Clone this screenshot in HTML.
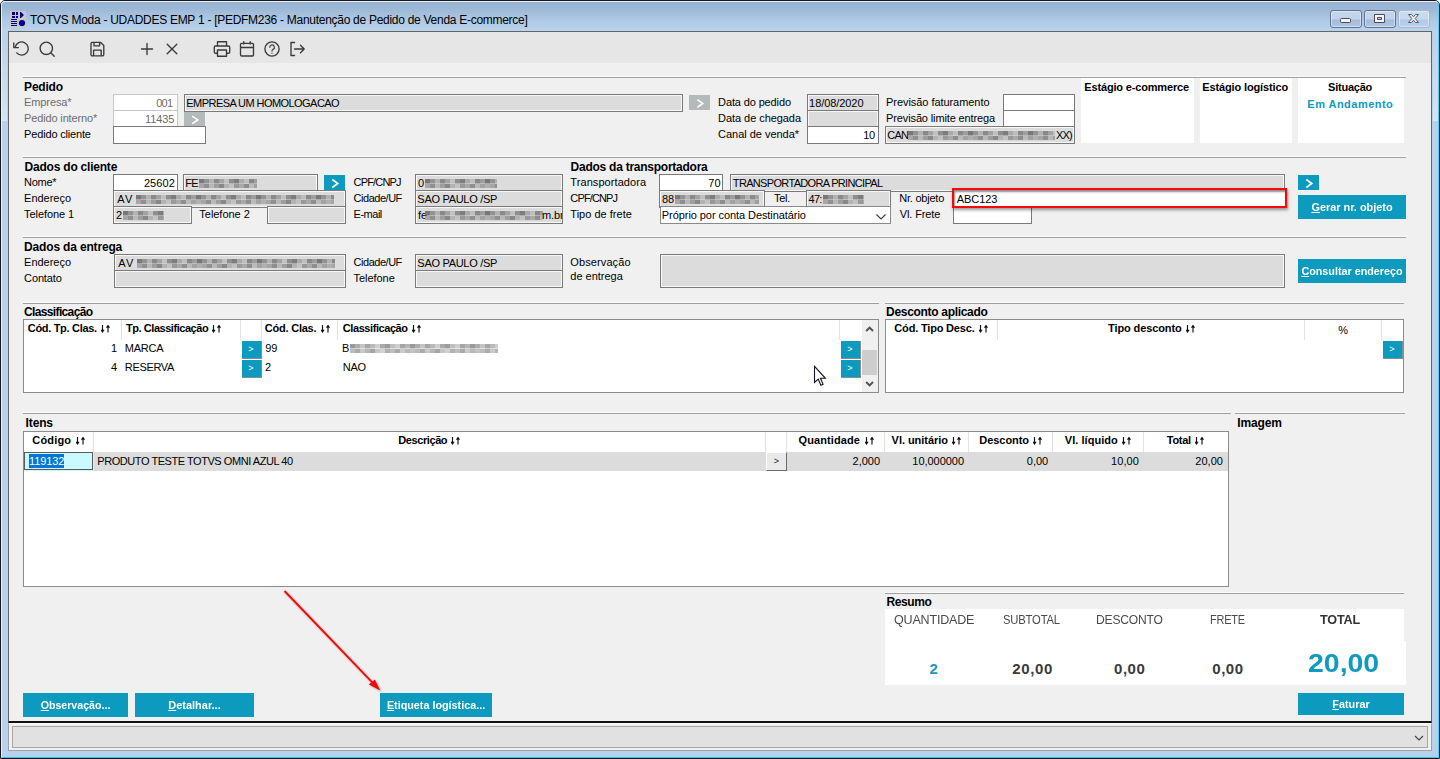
<!DOCTYPE html>
<html lang="pt-BR"><head>
<meta charset="utf-8">
<title>TOTVS Moda - PEDFM236</title>
<style>
*{margin:0;padding:0;box-sizing:border-box}
html,body{width:1440px;height:759px;overflow:hidden}
body{position:relative;background:#fff;font-family:"Liberation Sans",sans-serif;font-size:11px;color:#000}
.a{position:absolute}
#frame{left:0;top:0;width:1440px;height:759px;border:1px solid #15181c;border-radius:5px 5px 0 0;background:linear-gradient(#98b3d3 0px,#9db8d6 8px,#aecaE6 20px,#bcd4ed 31px,#b9d1ea 32px,#b9d1ea 100%)}
#frame:before{content:"";position:absolute;left:0;top:0;right:0;bottom:0;border:1px solid rgba(255,255,255,.75);border-bottom-color:#31c7e4;border-right-color:#4ad3f8;border-radius:4px 4px 0 0}
#title{left:30px;top:12px;font-size:12px;line-height:16px;letter-spacing:-0.28px;white-space:nowrap}
#client{left:8px;top:31px;width:1424px;height:692px;background:#f0f0f0;border:1px solid #646464;border-bottom:2px solid #111}
#tool{left:9px;top:32px;width:1422px;height:31px;background:#e6e6e6}
.sep{position:absolute;height:2px;margin-top:-1px;border-top:1px solid #fbfbfb;border-bottom:1px solid #9e9e9e}
.h{position:absolute;font-weight:bold;font-size:12px;line-height:14px;letter-spacing:-0.3px;white-space:nowrap}
.lb{position:absolute;line-height:16px;white-space:nowrap;letter-spacing:-0.12px}
.g{color:#6d6d6d}
.f{position:absolute;height:18px;border:1px solid #7a7a7a;background:#dcdcdc;box-shadow:inset 0 0 0 1px #f8f8f8;line-height:16px;padding:0 0 0 2px;white-space:nowrap;overflow:hidden;letter-spacing:-0.12px}
.w{background:#fff;box-shadow:none}
.l{border-color:#c8c8c8;color:#6d6d6d}
.r{text-align:right;padding-right:4px}
.uc{letter-spacing:-0.55px}
.btn{position:absolute;background:#0c9abe;color:#fff;font-weight:bold;font-size:11px;text-align:center;white-space:nowrap;letter-spacing:0}
.btn u{text-decoration:underline}
.ib{position:absolute;left:-40px;right:-40px;top:0;text-align:center}
.sb{position:absolute;background:#0c9abe}
.sb svg,.gb svg{position:absolute;left:0;top:0}
.gb{position:absolute;background:#b4baba}
.pan{position:absolute;background:#fff}
.tbl{position:absolute;background:#fff;border:1px solid #8c8c8c}
.th{position:absolute;font-weight:bold;font-size:11px;line-height:14px;white-space:nowrap;letter-spacing:-0.25px}
.cs{position:absolute;width:1px;background:#e2e2e2}
.td{position:absolute;line-height:16px;white-space:nowrap;letter-spacing:-0.12px}
.wb{top:10px;width:32px;height:18px;border:1px solid #5d7391;border-radius:3px;background:linear-gradient(#c3d6ec 0,#bfd2e9 8px,#a4bcdb 9px,#aec6e2 100%);box-shadow:inset 0 0 0 1px rgba(255,255,255,.45)}
.wc{border-color:#a3b8d4;background:linear-gradient(#c9dcf1 0,#c5d8ef 8px,#b3cae6 9px,#b9cfe9 100%)}
.bl{position:absolute;top:4px;height:9px;filter:blur(.35px);background:repeating-linear-gradient(90deg,#787878 0px 5px,#939393 5px 10px,#b2b2b2 10px 15px,#8a8a8a 15px 20px,#a3a3a3 20px 25px,#c0c0c0 25px 30px,#8e8e8e 30px 35px,#7d7d7d 35px 40px,#aaaaaa 40px 45px,#bebebe 45px 50px,#888888 50px 55px,#9e9e9e 55px 60px) top/100% 50% no-repeat,repeating-linear-gradient(90deg,#a6a6a6 0px 5px,#909090 5px 10px,#b8b8b8 10px 15px,#9e9e9e 15px 20px,#888888 20px 25px,#b3b3b3 25px 30px,#c2c2c2 30px 35px,#999999 35px 40px,#a9a9a9 40px 45px,#8e8e8e 45px 50px,#bababa 50px 55px,#a2a2a2 55px 60px,#b0b0b0 60px 65px) bottom/100% 50% no-repeat}
.so{margin-left:1.5px;vertical-align:baseline;position:relative;top:.5px}
.gt{color:#fff;font-size:9px;line-height:17px;text-align:center;text-indent:-2px;box-shadow:inset -1px -1px 0 rgba(170,140,130,.75)}
.rs{position:absolute;top:612px;white-space:nowrap;font-size:13px;line-height:16px;color:#4a4a4a;letter-spacing:-.2px}
.rv{position:absolute;top:660px;white-space:nowrap;font-size:15px;line-height:18px;font-weight:bold;color:#3a3a3a}
.blur{position:absolute;filter:blur(.6px)}
</style>
</head>
<body>
<div id="frame" class="a"></div>
<!-- app icon -->
<svg class="a" style="left:10px;top:11px" width="16" height="16" viewBox="0 0 16 16"><rect width="16" height="16" fill="#c8c8c8"></rect><g fill="#00008b"><rect x="2" y="1" width="3" height="3"></rect><rect x="6" y="1" width="2" height="3"></rect><rect x="2" y="5" width="3" height="2"></rect><rect x="6" y="5" width="2" height="2"></rect><path d="M10 1h1l3 3-3 3h-1z"></path><rect x="1" y="8" width="6" height="1"></rect><rect x="1" y="10" width="6" height="1"></rect><rect x="1" y="12" width="6" height="1"></rect><rect x="1" y="14" width="6" height="1"></rect><circle cx="12" cy="12" r="3.1"></circle></g></svg>
<div id="title" class="a">TOTVS Moda - UDADDES EMP 1 - [PEDFM236 - Manutenção de Pedido de Venda E-commerce]</div>
<div id="client" class="a"></div>
<div id="tool" class="a"></div>
<!-- window buttons -->
<div class="a wb" style="left:1330px"></div><div class="a wb" style="left:1364px"></div><div class="a wb wc" style="left:1398px"></div>
<svg class="a" style="left:1330px;top:10px" width="100" height="18" viewBox="0 0 100 18"><g fill="#f4f4f4" stroke="#4a4a58" stroke-width="1"><rect x="10.5" y="8.5" width="10" height="4" rx="1"></rect><path d="M44.500 4.500h10v8h-10zM47.500 7.500h4v2h-4z" fill-rule="evenodd"></path></g><path d="M78.500 4.500h3l2 2.300 2-2.300h3l-3.300 4 3.300 4h-3l-2-2.300-2 2.300h-3l3.300-4z" fill="#efefef" stroke="#565b6c" stroke-width="1" stroke-linejoin="round"></path></svg>
<div class="a" style="left:1433px;top:30px;width:5px;height:91px;background:linear-gradient(rgba(217,229,242,0),rgba(217,229,242,.95))"></div>
<div class="a" style="left:2px;top:30px;width:5px;height:91px;background:linear-gradient(rgba(217,229,242,0),rgba(217,229,242,.95))"></div>
<!-- toolbar icons -->
<svg class="a" style="left:9px;top:32px" width="310" height="31" viewBox="9 32 310 31" fill="none" stroke="#3a3a3a" stroke-width="1.35" stroke-linecap="round" stroke-linejoin="round">
<path d="M15.200 47.200a6.600 6.600 0 1 1 1.500 5.700M13.800 43v4.600h4.600"></path>
<circle cx="46.300" cy="48.300" r="6.200"></circle><path d="M50.800 52.800l3.400 3.400"></path>
<path d="M91 43.500a1.200 1.200 0 0 1 1.200-1.200h8.300l3.300 3.300v9a1.200 1.200 0 0 1-1.200 1.200h-10.400a1.200 1.200 0 0 1-1.200-1.200zM94 42.500v3.300h5.600v-3.300M93.600 55.600v-5.400h7.600v5.400"></path>
<path d="M141.500 49h11M147 43.500v11"></path>
<path d="M167.200 44.200l9.600 9.600M176.800 44.200l-9.600 9.600"></path>
<path d="M217.500 46v-4.300h9v4.300M217.500 53.200h-2a1.200 1.200 0 0 1-1.200-1.200v-4.800a1.200 1.200 0 0 1 1.200-1.200h13a1.200 1.200 0 0 1 1.200 1.200v4.800a1.200 1.200 0 0 1-1.200 1.200h-2M217.500 50h9v6.200h-9z"></path>
<path d="M240.500 44.500a1.200 1.200 0 0 1 1.200-1.200h10.600a1.200 1.200 0 0 1 1.200 1.200v10.300a1.200 1.200 0 0 1-1.200 1.200h-10.600a1.200 1.200 0 0 1-1.200-1.200zM240.500 47.500h13M243.800 41.600v2.400M250.200 41.600v2.400"></path>
<circle cx="272" cy="49" r="7.100"></circle><path d="M269.800 47.200a2.300 2.300 0 1 1 3.300 2.100c-.7.400-1.100.8-1.100 1.700M272 53.100v.2" stroke-width="1.200"></path>
<path d="M294.500 42.500h-3.500v13h3.500M294.500 49h9.500M300.500 45.200l3.700 3.800-3.700 3.800"></path>
</svg>
<!-- ===== Pedido ===== -->
<div class="sep" style="left:23px;top:77px;width:1383px"></div>
<div class="h" style="left: 24.1px; top: 80px; letter-spacing: -0.21px;">Pedido</div>
<div class="lb g" style="left: 24.1px; top: 94px; letter-spacing: -0.12px;">Empresa*</div>
<div class="lb g" style="left: 24.1px; top: 110px; letter-spacing: -0.15px;">Pedido interno*</div>
<div class="lb" style="left: 24.1px; top: 126px; letter-spacing: -0.17px;">Pedido cliente</div>
<div class="f w l r" style="left: 113px; top: 94px; width: 65px; padding-right: 4.6px; letter-spacing: -0.7px;">001</div>
<div class="f w l r" style="left: 113px; top: 110px; width: 65px; padding-right: 2.73px; letter-spacing: -0.08px;">11435</div>
<div class="f uc" style="left: 184px; top: 94px; width: 499px; letter-spacing: -0.56px; padding-left: 1.35px;">EMPRESA UM HOMOLOGACAO</div>
<div class="gb" style="left:184px;top:112px;width:21px;height:14px"><svg width="21" height="14" viewBox="0 0 21 14"><path d="M8.200 4.200l5.600 3.700-5.600 3.800" fill="none" stroke="#fff" stroke-width="1.600"></path></svg></div>
<div class="f w" style="left:113px;top:126px;width:93px"></div>
<div class="gb" style="left:689px;top:95px;width:21px;height:15px"><svg width="21" height="15" viewBox="0 0 21 15"><path d="M8.300 4.700l5.400 3.800-5.400 3.900" fill="none" stroke="#fff" stroke-width="1.600"></path></svg></div>
<div class="lb" style="left: 718.1px; top: 94px; letter-spacing: -0.13px;">Data do pedido</div>
<div class="lb" style="left: 718.1px; top: 110px; letter-spacing: -0.06px;">Data de chegada</div>
<div class="lb" style="left: 718.1px; top: 126px; letter-spacing: -0.03px;">Canal de venda*</div>
<div class="f" style="left: 807px; top: 94px; width: 72px; letter-spacing: -0.07px; padding-left: 1.1px;">18/08/2020</div>
<div class="f" style="left:807px;top:110px;width:72px"></div>
<div class="f w r" style="left: 807px; top: 126px; width: 72px; padding-right: 3.2px; letter-spacing: -0.3px;">10</div>
<div class="lb" style="left: 886.1px; top: 94px; letter-spacing: -0.06px;">Previsão faturamento</div>
<div class="lb" style="left: 886.1px; top: 110px; letter-spacing: -0.13px;">Previsão limite entrega</div>
<div class="f w" style="left:1003px;top:94px;width:72px"></div>
<div class="f w" style="left:1003px;top:110px;width:72px"></div>
<div class="f uc" style="left: 885px; top: 126px; width: 190px; letter-spacing: -0.77px; padding-left: 1.35px;">CAN<i class="bl" style="left:22px;width:147px"></i><span style="position:absolute;right:2px;top:0">XX)</span></div>
<div class="pan" style="left:1081px;top:78px;width:113px;height:65px"></div>
<div class="pan" style="left:1200px;top:78px;width:92px;height:65px"></div>
<div class="pan" style="left:1298px;top:78px;width:106px;height:65px"></div>
<div class="h" style="left: 1084.35px; top: 80px; font-size: 11px; letter-spacing: -0.17px;">Estágio e-commerce</div>
<div class="h" style="left: 1202.35px; top: 80px; font-size: 11px; letter-spacing: -0.14px;">Estágio logístico</div>
<div class="h" style="left: 1328.1px; top: 80px; font-size: 11px; letter-spacing: -0.24px;">Situação</div>
<div class="h" style="left: 1307.35px; top: 97px; font-size: 11px; color: rgb(12, 154, 190); letter-spacing: 0.47px;">Em Andamento</div>
<!-- ===== Dados do cliente ===== -->
<div class="sep" style="left:23px;top:157px;width:1383px"></div>
<div class="h" style="left: 24.6px; top: 160px; letter-spacing: -0.22px;">Dados do cliente</div>
<div class="lb" style="left: 24.1px; top: 174px; letter-spacing: -0.29px;">Nome*</div>
<div class="lb" style="left: 24.1px; top: 190px; letter-spacing: -0.02px;">Endereço</div>
<div class="lb" style="left: 24.1px; top: 206px; letter-spacing: -0.09px;">Telefone 1</div>
<div class="f w r" style="left: 113px; top: 174px; width: 65px; padding-right: 2.06px; letter-spacing: 0.09px;">25602</div>
<div class="f uc" style="left: 183px; top: 174px; width: 135px; letter-spacing: -0.86px; padding-left: 1.35px;">FE<i class="bl" style="left:15px;width:58px"></i></div>
<div class="sb" style="left:324px;top:175px;width:21px;height:15px"><svg width="21" height="15" viewBox="0 0 21 15"><path d="M8.300 4.500l5.400 4-5.400 4" fill="none" stroke="#fff" stroke-width="1.700"></path></svg></div>
<div class="f uc" style="left: 113px; top: 190px; width: 233px; padding-left: 3.35px; letter-spacing: 1.09px;">AV<i class="bl" style="left:22px;width:198px"></i></div>
<div class="f" style="left:113px;top:206px;width:79px">2<i class="bl" style="left:9px;width:41px"></i></div>
<div class="lb" style="left: 199.35px; top: 206px; letter-spacing: -0.04px;">Telefone 2</div>
<div class="f" style="left:267px;top:206px;width:79px"></div>
<div class="lb" style="left: 353.6px; top: 174px; letter-spacing: -0.83px;">CPF/CNPJ</div>
<div class="lb" style="left: 353.6px; top: 190px; letter-spacing: -0.48px;">Cidade/UF</div>
<div class="lb" style="left: 353.6px; top: 206px; letter-spacing: -0.49px;">E-mail</div>
<div class="f" style="left:415px;top:174px;width:148px">0<i class="bl" style="left:9px;width:72px"></i></div>
<div class="f uc" style="left: 415px; top: 190px; width: 148px; letter-spacing: -0.3px; padding-left: 1.35px;">SAO PAULO /SP</div>
<div class="f" style="left:415px;top:206px;width:148px">fe<i class="bl" style="left:9px;width:118px"></i><span style="position:absolute;left:126px;top:0">m.br</span></div>
<!-- ===== Dados da transportadora ===== -->
<div class="h" style="left: 570.55px; top: 160px; letter-spacing: -0.25px;">Dados da transportadora</div>
<div class="lb" style="left: 570.35px; top: 174px; letter-spacing: 0.07px;">Transportadora</div>
<div class="lb" style="left: 570.35px; top: 190px; letter-spacing: -0.87px;">CPF/CNPJ</div>
<div class="lb" style="left: 570.35px; top: 206px; letter-spacing: 0.01px;">Tipo de frete</div>
<div class="f w r" style="left: 659px; top: 174px; width: 64px; padding-right: 1.2px; letter-spacing: 0.2px;">70</div>
<div class="f uc" style="left: 730px; top: 174px; width: 555px; letter-spacing: -0.67px; padding-left: 1.85px;">TRANSPORTADORA PRINCIPAL</div>
<div class="f" style="left:659px;top:190px;width:106px">88<i class="bl" style="left:15px;width:84px"></i></div>
<div class="lb" style="left: 774.1px; top: 190px; letter-spacing: -0.31px;">Tel.</div>
<div class="f" style="left: 806px; top: 190px; width: 85px; letter-spacing: -0.8px; padding-left: 1.6px;">47:<i class="bl" style="left:16px;width:41px"></i></div>
<div class="f w" style="left: 660px; top: 206px; width: 231px; border-color: rgb(138, 138, 138); letter-spacing: -0.07px; padding-left: 0.85px;">Próprio por conta Destinatário<svg style="position:absolute;right:3px;top:5.5px" width="12" height="8" viewBox="0 0 12 8"><path d="M1.500 1.500l4.500 4.500 4.500-4.500" fill="none" stroke="#404040" stroke-width="1.100"></path></svg></div>
<div class="lb" style="left: 899.35px; top: 190px; letter-spacing: -0.24px;">Nr. objeto</div>
<div class="lb" style="left: 899.85px; top: 206px; letter-spacing: -0.14px;">Vl. Frete</div>
<div class="f w" style="left:953px;top:206px;width:79px"></div>
<div class="f w" style="left: 954px; top: 190px; width: 331px; height: 16px; border: 0px; line-height: 18px; padding-left: 2.85px; letter-spacing: -0.11px;">ABC123</div>
<div class="a" style="left:952px;top:188px;width:335px;height:20px;border:2px solid #fb0505;box-shadow:1px 2px 3px rgba(0,0,0,.4),inset 1px 2px 2px rgba(0,0,0,.45)"></div>
<div class="sb" style="left:1298px;top:175px;width:21px;height:15px"><svg width="21" height="15" viewBox="0 0 21 15"><path d="M8.300 4.500l5.400 4-5.400 4" fill="none" stroke="#fff" stroke-width="1.700"></path></svg></div>
<div class="btn" style="left:1298px;top:195px;width:108px;height:24px;line-height:24px"><span class="ib" style="transform: scaleX(0.991); transform-origin: 50% 50%;"><u>G</u>erar nr. objeto</span></div>
<!-- ===== Dados da entrega ===== -->
<div class="sep" style="left:23px;top:237px;width:1383px"></div>
<div class="h" style="left: 24.1px; top: 240px; letter-spacing: -0.17px;">Dados da entrega</div>
<div class="lb" style="left: 24.1px; top: 254px; letter-spacing: -0.02px;">Endereço</div>
<div class="lb" style="left: 24.1px; top: 270px; letter-spacing: -0.14px;">Contato</div>
<div class="f uc" style="left: 114px; top: 254px; width: 232px; padding-left: 3.35px; letter-spacing: 1.09px;">AV<i class="bl" style="left:22px;width:198px"></i></div>
<div class="f" style="left:114px;top:270px;width:232px"></div>
<div class="lb" style="left: 353.6px; top: 254px; letter-spacing: -0.48px;">Cidade/UF</div>
<div class="lb" style="left: 353.6px; top: 270px; letter-spacing: -0.06px;">Telefone</div>
<div class="f uc" style="left: 415px; top: 254px; width: 148px; letter-spacing: -0.3px; padding-left: 1.35px;">SAO PAULO /SP</div>
<div class="f" style="left:415px;top:270px;width:148px"></div>
<div class="lb" style="left: 570.35px; top: 254px; letter-spacing: 0.1px;">Observação</div><div class="lb" style="left: 570.35px; top: 268px; letter-spacing: -0.02px;">de entrega</div>
<div class="f" style="left:660px;top:254px;width:625px;height:34px"></div>
<div class="btn" style="left:1298px;top:259px;width:108px;height:24px;line-height:24px"><span class="ib" style="transform: scaleX(0.98); transform-origin: 50% 50%;"><u>C</u>onsultar endereço</span></div>
<!-- ===== Classificação ===== -->
<div class="sep" style="left:23px;top:303px;width:856px"></div>
<div class="h" style="left: 24.1px; top: 305px; letter-spacing: -0.65px;">Classificação</div>
<div class="tbl" style="left:23px;top:319px;width:856px;height:74px"></div>
<div class="cs" style="left:121px;top:320px;height:20px"></div><div class="cs" style="left:240px;top:320px;height:20px"></div><div class="cs" style="left:261px;top:320px;height:20px"></div><div class="cs" style="left:337px;top:320px;height:20px"></div><div class="cs" style="left:839px;top:320px;height:20px"></div><div class="cs" style="left:862px;top:320px;height:72px;background:#f0f0f0;width:16px"></div>
<div class="th" style="left: 27.75px; top: 321px; letter-spacing: -0.31px;">Cód. Tp. Clas. <svg class="so" width="10" height="8" viewBox="0 0 10 8"><path d="M1.500 0v7.200M0 4.700l1.500 2.300 1.500-2.300M7 7.500v-7.200M5.500 2.800l1.500-2.300 1.500 2.300" stroke="#111" stroke-width="1.150" fill="none"></path></svg></div>
<div class="th" style="left: 126.1px; top: 321px; letter-spacing: -0.46px;">Tp. Classificação <svg class="so" width="10" height="8" viewBox="0 0 10 8"><path d="M1.500 0v7.200M0 4.700l1.500 2.300 1.500-2.300M7 7.500v-7.200M5.500 2.800l1.500-2.300 1.500 2.300" stroke="#111" stroke-width="1.150" fill="none"></path></svg></div>
<div class="th" style="left: 264.85px; top: 321px; letter-spacing: -0.23px;">Cód. Clas. <svg class="so" width="10" height="8" viewBox="0 0 10 8"><path d="M1.500 0v7.200M0 4.700l1.500 2.300 1.500-2.300M7 7.500v-7.200M5.500 2.800l1.500-2.300 1.500 2.300" stroke="#111" stroke-width="1.150" fill="none"></path></svg></div>
<div class="th" style="left: 342.85px; top: 321px; letter-spacing: -0.43px;">Classificação <svg class="so" width="10" height="8" viewBox="0 0 10 8"><path d="M1.500 0v7.200M0 4.700l1.500 2.300 1.500-2.300M7 7.500v-7.200M5.500 2.800l1.500-2.300 1.500 2.300" stroke="#111" stroke-width="1.150" fill="none"></path></svg></div>
<div class="td" style="left:60px;top:340px;width:57px;text-align:right">1</div>
<div class="td uc" style="left: 124.85px; top: 340px; letter-spacing: -0.26px;">MARCA</div>
<div class="td" style="left: 265.35px; top: 340px; letter-spacing: -0.3px;">99</div>
<div class="td" style="left:342px;top:340px">B<i class="bl" style="left:8px;width:148px;top:4px;opacity:.75"></i></div>
<div class="td" style="left:60px;top:359px;width:57px;text-align:right">4</div>
<div class="td uc" style="left: 124.85px; top: 359px; letter-spacing: -0.35px;">RESERVA</div>
<div class="td" style="left:265px;top:359px">2</div>
<div class="td uc" style="left: 342.85px; top: 359px; letter-spacing: -0.32px;">NAO</div>
<div class="sb gt" style="left:242px;top:341px;width:20px;height:18px">&gt;</div>
<div class="sb gt" style="left:242px;top:360px;width:20px;height:18px">&gt;</div>
<div class="sb gt" style="left:841px;top:341px;width:20px;height:18px">&gt;</div>
<div class="sb gt" style="left:841px;top:360px;width:20px;height:18px">&gt;</div>
<svg class="a" style="left:861px;top:320px" width="17" height="72" viewBox="0 0 17 72" fill="none" stroke="#505050" stroke-width="1.900"><rect x="1" y="30" width="15" height="25" fill="#cdcdcd" stroke="none"></rect><path d="M5.200 11l3.400-3.400 3.400 3.400M5.200 62l3.400 3.400 3.400-3.400"></path></svg>
<!-- ===== Desconto aplicado ===== -->
<div class="sep" style="left:885px;top:303px;width:519px"></div>
<div class="h" style="left: 886.1px; top: 305px; letter-spacing: -0.31px;">Desconto aplicado</div>
<div class="tbl" style="left:885px;top:319px;width:519px;height:74px"></div>
<div class="cs" style="left:997px;top:320px;height:20px"></div><div class="cs" style="left:1304px;top:320px;height:20px"></div><div class="cs" style="left:1381px;top:320px;height:20px"></div>
<div class="th" style="left: 894.35px; top: 321px; letter-spacing: -0.18px;">Cód. Tipo Desc. <svg class="so" width="10" height="8" viewBox="0 0 10 8"><path d="M1.500 0v7.200M0 4.700l1.500 2.300 1.500-2.300M7 7.500v-7.200M5.500 2.800l1.500-2.300 1.500 2.300" stroke="#111" stroke-width="1.150" fill="none"></path></svg></div>
<div class="th" style="left: 1108.1px; top: 321px; letter-spacing: -0.11px;">Tipo desconto <svg class="so" width="10" height="8" viewBox="0 0 10 8"><path d="M1.500 0v7.200M0 4.700l1.500 2.300 1.500-2.300M7 7.500v-7.200M5.500 2.800l1.500-2.300 1.500 2.300" stroke="#111" stroke-width="1.150" fill="none"></path></svg></div>
<div class="td" style="left:1305px;top:322px;width:76px;text-align:center">%</div>
<div class="sb gt" style="left:1383px;top:341px;width:20px;height:18px">&gt;</div>
<!-- mouse cursor -->
<svg class="a" style="left:813px;top:365px" width="15" height="22" viewBox="0 0 15 22"><path d="M1.500 1.300v16.200l3.700-3.400 2.700 6.200 2.200-1-2.700-6h5z" fill="#fff" stroke="#14142a" stroke-width="1.100"></path></svg>
<!-- ===== Itens ===== -->
<div class="sep" style="left:23px;top:413px;width:1208px"></div>
<div class="h" style="left: 25.6px; top: 416px; letter-spacing: -0.14px;">Itens</div>
<div class="sep" style="left:1235px;top:413px;width:170px"></div>
<div class="h" style="left: 1237.35px; top: 416px; letter-spacing: -0.18px;">Imagem</div>
<div class="tbl" style="left:23px;top:431px;width:1206px;height:156px"></div>
<div class="a" style="left:24px;top:452px;width:1204px;height:19px;background:#dcdcdc"></div>
<div class="cs" style="left:93px;top:432px;height:20px"></div><div class="cs" style="left:765px;top:432px;height:20px"></div><div class="cs" style="left:786px;top:432px;height:20px"></div><div class="cs" style="left:884px;top:432px;height:20px"></div><div class="cs" style="left:968px;top:432px;height:20px"></div><div class="cs" style="left:1052px;top:432px;height:20px"></div><div class="cs" style="left:1143px;top:432px;height:20px"></div>
<div class="th" style="left: 32.35px; top: 433px; letter-spacing: 0.16px;">Código <svg class="so" width="10" height="8" viewBox="0 0 10 8"><path d="M1.500 0v7.200M0 4.700l1.500 2.300 1.500-2.300M7 7.500v-7.200M5.500 2.800l1.500-2.300 1.500 2.300" stroke="#111" stroke-width="1.150" fill="none"></path></svg></div>
<div class="th" style="left: 398.35px; top: 433px; letter-spacing: -0.42px;">Descrição <svg class="so" width="10" height="8" viewBox="0 0 10 8"><path d="M1.500 0v7.200M0 4.700l1.500 2.300 1.500-2.300M7 7.500v-7.200M5.500 2.800l1.500-2.300 1.500 2.300" stroke="#111" stroke-width="1.150" fill="none"></path></svg></div>
<div class="th" style="left: 798.6px; top: 433px; letter-spacing: 0.08px;">Quantidade <svg class="so" width="10" height="8" viewBox="0 0 10 8"><path d="M1.500 0v7.200M0 4.700l1.500 2.300 1.500-2.300M7 7.500v-7.200M5.500 2.800l1.500-2.300 1.500 2.300" stroke="#111" stroke-width="1.150" fill="none"></path></svg></div>
<div class="th" style="left: 891.6px; top: 433px; letter-spacing: -0.04px;">Vl. unitário <svg class="so" width="10" height="8" viewBox="0 0 10 8"><path d="M1.500 0v7.200M0 4.700l1.500 2.300 1.500-2.300M7 7.500v-7.200M5.500 2.800l1.500-2.300 1.500 2.300" stroke="#111" stroke-width="1.150" fill="none"></path></svg></div>
<div class="th" style="left: 979.35px; top: 433px; letter-spacing: -0.06px;">Desconto <svg class="so" width="10" height="8" viewBox="0 0 10 8"><path d="M1.500 0v7.200M0 4.700l1.500 2.300 1.500-2.300M7 7.500v-7.200M5.500 2.800l1.500-2.300 1.500 2.300" stroke="#111" stroke-width="1.150" fill="none"></path></svg></div>
<div class="th" style="left: 1064.85px; top: 433px; letter-spacing: 0.04px;">Vl. líquido <svg class="so" width="10" height="8" viewBox="0 0 10 8"><path d="M1.500 0v7.200M0 4.700l1.500 2.300 1.500-2.300M7 7.500v-7.200M5.500 2.800l1.500-2.300 1.500 2.300" stroke="#111" stroke-width="1.150" fill="none"></path></svg></div>
<div class="th" style="left: 1166.85px; top: 433px; letter-spacing: -0.32px;">Total <svg class="so" width="10" height="8" viewBox="0 0 10 8"><path d="M1.500 0v7.200M0 4.700l1.500 2.300 1.500-2.300M7 7.500v-7.200M5.500 2.800l1.500-2.300 1.500 2.300" stroke="#111" stroke-width="1.150" fill="none"></path></svg></div>
<div class="a" style="left:24px;top:452px;width:70px;height:19px;background:#c8faff"></div><div class="a" style="left:24px;top:452px;width:69px;height:18px;border:1px solid #5a5a5a"></div>
<div class="td" style="left:29px;top:454px;height:14px;line-height:14px;background:#0078d7;color:#fff;letter-spacing:-.1px">119132</div>
<div class="td uc" style="left: 97.35px; top: 453px; letter-spacing: -0.45px;">PRODUTO TESTE TOTVS OMNI AZUL 40</div>
<div class="a" style="left:766px;top:452px;width:21px;height:19px;background:#e9e9e9;border:1px solid #fff;border-right-color:#6a6a6a;border-bottom-color:#6a6a6a;font-size:9px;line-height:17px;text-align:center;color:#222">&gt;</div>
<div class="td" style="left: 800px; top: 453px; width: 80px; text-align: right; letter-spacing: -0.02px;">2,000</div>
<div class="td" style="left: 890px; top: 453px; width: 74px; text-align: right; letter-spacing: -0.04px;">10,000000</div>
<div class="td" style="left: 980px; top: 453px; width: 68px; text-align: right; letter-spacing: -0.07px;">0,00</div>
<div class="td" style="left: 1060px; top: 453px; width: 79px; text-align: right; letter-spacing: 0.1px;">10,00</div>
<div class="td" style="left: 1150px; top: 453px; width: 73px; text-align: right; letter-spacing: 0.04px;">20,00</div>
<!-- ===== Resumo ===== -->
<div class="sep" style="left:885px;top:593px;width:519px"></div>
<div class="h" style="left: 886.6px; top: 595px; letter-spacing: -0.43px;">Resumo</div>
<div class="pan" style="left:885px;top:609px;width:519px;height:76px"></div>
<div class="pan" style="left:885px;top:641px;width:521px;height:44px"></div>
<div class="rs" style="left: 894.1px; transform: scaleX(0.964); transform-origin: 0px 0px;">QUANTIDADE</div>
<div class="rs" style="left: 1002.85px; transform: scaleX(0.865); transform-origin: 0px 0px;">SUBTOTAL</div>
<div class="rs" style="left: 1096.1px; transform: scaleX(0.928); transform-origin: 0px 0px;">DESCONTO</div>
<div class="rs" style="left: 1209.85px; transform: scaleX(0.84); transform-origin: 0px 0px;">FRETE</div>
<div class="rs" style="left: 1319.85px; font-weight: bold; color: rgb(51, 51, 51); transform: scaleX(0.971); transform-origin: 0px 0px;">TOTAL</div>
<div class="rv" style="left:929.5px;color:#1b97bd">2</div>
<div class="rv" style="left: 1012.35px; letter-spacing: 0.6px;">20,00</div>
<div class="rv" style="left: 1114.1px; letter-spacing: 0.5px;">0,00</div>
<div class="rv" style="left: 1212.35px; letter-spacing: 0.5px;">0,00</div>
<div class="a" style="left: 1307.85px; top: 648px; white-space: nowrap; font-weight: bold; font-size: 26.5px; line-height: 30px; color: rgb(15, 154, 192); transform: scaleX(1.073); transform-origin: 0px 0px;">20,00</div>
<!-- ===== bottom buttons ===== -->
<div class="btn" style="left:23px;top:693px;width:105px;height:24px;line-height:24px"><span class="ib" style="transform: scaleX(0.966); transform-origin: 50% 50%;"><u>O</u>bservação...</span></div>
<div class="btn" style="left:135px;top:693px;width:119px;height:24px;line-height:24px"><span class="ib" style="transform: scaleX(0.997); transform-origin: 50% 50%;"><u>D</u>etalhar...</span></div>
<div class="btn" style="left:380px;top:693px;width:112px;height:24px;line-height:24px"><span class="ib" style="transform: scaleX(0.98); transform-origin: 50% 50%;"><u>E</u>tiqueta logística...</span></div>
<div class="btn" style="left:1298px;top:693px;width:106px;height:22px;line-height:22px"><span class="ib" style="transform: scaleX(0.988); transform-origin: 50% 50%;"><u>F</u>aturar</span></div>
<!-- red arrow -->
<svg class="a" style="left:270px;top:580px" width="130" height="125" viewBox="270 580 130 125"><g style="filter:drop-shadow(1px 1px 1px rgba(0,0,0,.3))"><path d="M284.500 591l88 91.700" stroke="#fb0606" stroke-width="1.900" fill="none"></path><path d="M380.300 690.600l-11.600-6 6.100-5.100z" fill="#fb0606"></path></g></svg>
<!-- status bar -->
<div class="a" style="left:8px;top:723px;width:1424px;height:28px;background:#f0f0f0;border:1px solid #a0a0a0;border-top-color:#fafafa"></div>
<div class="a" style="left:12px;top:726px;width:1416px;height:22px;background:#e1e1e1;border:1px solid #a6a6a6"></div>
<svg class="a" style="left:1414px;top:734px" width="10" height="8" viewBox="0 0 10 8"><path d="M1 2l4 4 4-4" fill="none" stroke="#404040" stroke-width="1.100"></path></svg>


</body></html>
